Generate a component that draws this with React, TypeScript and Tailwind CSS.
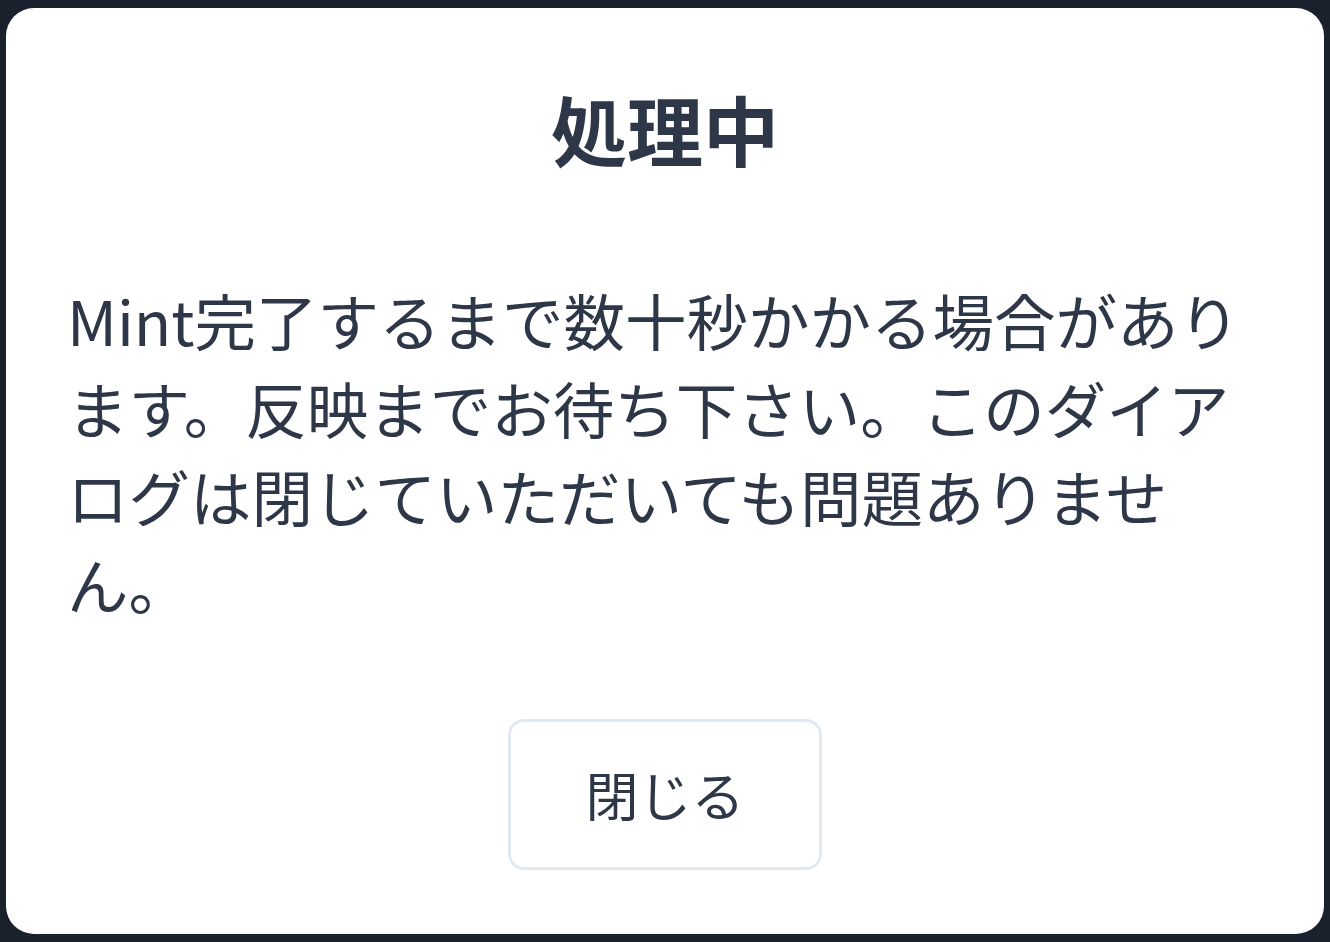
import React from "react";

export default function App() {
  return (
    <div
      className="w-[1330px] h-[942px] bg-[#1a202c] pt-[8px] pb-[8px] pl-[6px] pr-[6px] flex"
      style={{ fontFamily: '"Noto Sans CJK JP", "Noto Sans", sans-serif' }}
    >
      <div className="flex-1 bg-white rounded-[28px] pt-[63px] pb-[64px] px-[61px] flex flex-col items-center">
        <h1 className="text-[76px] leading-[114px] font-bold text-[#2d3748] text-center">
          処理中
        </h1>
        <p className="mt-[91px] text-[61.5px] leading-[88px] text-[#2d3748] self-stretch">
          Mint完了するまで数十秒かかる場合があります。反映までお待ち下さい。このダイアログは閉じていただいても問題ありません。
        </p>
        <button className="mt-[91px] w-[314px] h-[151px] rounded-[16px] border-[3px] border-[#e2e8f0] bg-white text-[53px] text-[#2d3748] flex items-center justify-center">
          閉じる
        </button>
      </div>
    </div>
  );
}
